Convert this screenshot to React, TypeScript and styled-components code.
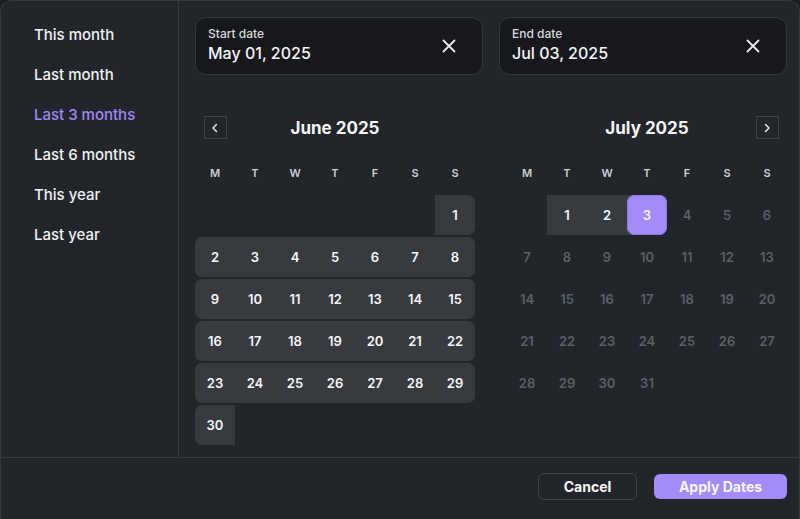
import styled, { createGlobalStyle } from 'styled-components';

const GlobalStyle = createGlobalStyle`
  html, body {
    margin: 0;
    padding: 0;
    background: #1b1d21;
  }
  * {
    box-sizing: border-box;
  }
`;

const Panel = styled.div`
  width: 800px;
  height: 519px;
  background: #222529;
  border: 1px solid #363a3f;
  border-bottom: none;
  border-radius: 12px 12px 0 0;
  display: grid;
  grid-template-columns: 178px 1fr;
  grid-template-rows: 456px 1fr;
  font-family: Inter, 'Noto Sans', sans-serif;
  color: #f2f3f5;
  overflow: hidden;
`;

const Sidebar = styled.div`
  border-right: 1px solid #363a3f;
  padding: 14px 0 0 33px;
  display: flex;
  flex-direction: column;
`;

const Preset = styled.div<{ $active?: boolean }>`
  height: 40px;
  font-size: 15px;
  font-weight: 500;
  line-height: 40px;
  color: ${(p) => (p.$active ? '#9f88f5' : '#f0f1f3')};
  cursor: pointer;
`;

const Main = styled.div`
  padding: 16px 12px 0 16px;
  display: flex;
  flex-direction: column;
`;

const Inputs = styled.div`
  display: grid;
  grid-template-columns: 288px 288px;
  gap: 16px;
`;

const DateField = styled.div`
  height: 58px;
  background: #17181b;
  border: 1px solid #34373c;
  border-radius: 11px;
  display: flex;
  align-items: center;
  padding: 0 24px 3px 12px;
`;

const FieldText = styled.div`
  flex: 1;
  display: flex;
  flex-direction: column;
  gap: 2px;
`;

const FieldLabel = styled.span`
  font-size: 12px;
  color: #d6d8dc;
  font-weight: 500;
  line-height: 15px;
`;

const FieldValue = styled.span`
  font-size: 16px;
  font-weight: 500;
  color: #f4f5f7;
  line-height: 20px;
`;

const ClearButton = styled.button`
  background: none;
  border: none;
  padding: 0;
  margin-top: 3px;
  width: 18px;
  height: 18px;
  display: flex;
  align-items: center;
  justify-content: center;
  color: #e8e9ec;
  cursor: pointer;
`;

const Calendars = styled.div`
  margin-top: 41px;
  display: grid;
  grid-template-columns: 280px 280px;
  gap: 32px;
`;

const Month = styled.div`
  display: flex;
  flex-direction: column;
`;

const Header = styled.div`
  height: 23px;
  display: grid;
  grid-template-columns: 40px 1fr 40px;
  align-items: center;
`;

const NavButton = styled.button`
  justify-self: center;
  width: 23px;
  height: 23px;
  padding: 0;
  background: transparent;
  border: 1px solid #3e4248;
  color: #e4e6e9;
  display: flex;
  align-items: center;
  justify-content: center;
  cursor: pointer;
`;

const Title = styled.div`
  text-align: center;
  font-size: 17px;
  font-weight: 700;
  color: #f5f6f8;
`;

const Weekdays = styled.div`
  margin-top: 24px;
  display: grid;
  grid-template-columns: repeat(7, 40px);
  height: 20px;
  align-items: center;
  margin-bottom: 12px;
`;

const Weekday = styled.span`
  text-align: center;
  font-size: 11px;
  font-weight: 600;
  color: #cdd0d4;
`;

const Days = styled.div`
  display: grid;
  grid-template-columns: repeat(7, 40px);
  grid-auto-rows: 40px;
  row-gap: 2px;
`;

const Cell = styled.div<{ $range: boolean; $left: boolean; $right: boolean; $half?: boolean }>`
  display: flex;
  align-items: center;
  justify-content: center;
  background: ${(p) =>
    p.$half
      ? 'linear-gradient(to right, #373b40 50%, transparent 50%)'
      : p.$range
      ? '#373b40'
      : 'transparent'};
  border-top-left-radius: ${(p) => (p.$left ? '7px' : '0')};
  border-bottom-left-radius: ${(p) => (p.$left ? '7px' : '0')};
  border-top-right-radius: ${(p) => (p.$right ? '7px' : '0')};
  border-bottom-right-radius: ${(p) => (p.$right ? '7px' : '0')};
`;

const DayNum = styled.span<{ $muted?: boolean; $selected?: boolean }>`
  width: 100%;
  height: 100%;
  display: flex;
  align-items: center;
  justify-content: center;
  font-size: 13px;
  font-weight: 600;
  color: ${(p) => (p.$muted ? '#5b6067' : '#f5f6f8')};
  background: ${(p) => (p.$selected ? '#a38cfa' : 'transparent')};
  border-radius: ${(p) => (p.$selected ? '8px' : '0')};
  box-shadow: ${(p) => (p.$selected ? 'inset 0 0 0 1px #9079ea' : 'none')};
`;

const Footer = styled.div`
  grid-column: 1 / 3;
  border-top: 1px solid #363a3f;
  display: flex;
  align-items: center;
  justify-content: flex-end;
  gap: 17px;
  padding: 0 12px 4px 0;
`;

const Button = styled.button<{ $primary?: boolean }>`
  height: ${(p) => (p.$primary ? '25px' : '27px')};
  padding: 0;
  width: ${(p) => (p.$primary ? '133px' : '99px')};
  border-radius: 6px;
  border: ${(p) => (p.$primary ? 'none' : '1px solid #3e4248')};
  background: ${(p) => (p.$primary ? '#a38cfa' : 'transparent')};
  color: #f7f7f9;
  font-family: Inter, 'Noto Sans', sans-serif;
  font-size: 14px;
  font-weight: 700;
  cursor: pointer;
`;

const XIcon = () => (
  <svg width="16" height="16" viewBox="0 0 16 16" fill="none" stroke="currentColor" strokeWidth="1.8" strokeLinecap="round">
    <path d="M2.5 2.5l11 11M13.5 2.5l-11 11" />
  </svg>
);

const Chevron = ({ dir }: { dir: 'left' | 'right' }) => (
  <svg width="12" height="12" viewBox="0 0 12 12" fill="none" stroke="currentColor" strokeWidth="1.5" strokeLinecap="round" strokeLinejoin="round">
    <path d={dir === 'left' ? 'M7.5 2.5L4 6l3.5 3.5' : 'M4.5 2.5L8 6 4.5 9.5'} />
  </svg>
);

const presets = ['This month', 'Last month', 'Last 3 months', 'Last 6 months', 'This year', 'Last year'];
const weekdays = ['M', 'T', 'W', 'T', 'F', 'S', 'S'];

type MonthProps = {
  title: string
  offset: number
  length: number
  rangeEnd: number
  selected?: number
  nav: 'left' | 'right'
}

function MonthView({ title, offset, length, rangeEnd, selected, nav }: MonthProps) {
  const cells = [];
  for (let i = 0; i < offset; i++) {
    cells.push(<div key={'e' + i} />);
  }
  for (let d = 1; d <= length; d++) {
    const col = (offset + d - 1) % 7;
    const inRange = d <= rangeEnd;
    const isSel = d === selected;
    cells.push(
      <Cell
        key={d}
        $range={inRange && !isSel}
        $half={isSel && col !== 0}
        $left={col === 0}
        $right={col === 6}
      >
        <DayNum $muted={!inRange} $selected={isSel}>
          {d}
        </DayNum>
      </Cell>
    );
  }

  return (
    <Month>
      <Header>
        {nav === 'left' ? (
          <NavButton>
            <Chevron dir="left" />
          </NavButton>
        ) : (
          <span />
        )}
        <Title>{title}</Title>
        {nav === 'right' ? (
          <NavButton>
            <Chevron dir="right" />
          </NavButton>
        ) : (
          <span />
        )}
      </Header>
      <Weekdays>
        {weekdays.map((w, i) => (
          <Weekday key={i}>{w}</Weekday>
        ))}
      </Weekdays>
      <Days>{cells}</Days>
    </Month>
  );
}

export default function App() {
  return (
    <>
      <GlobalStyle />
      <Panel>
        <Sidebar>
          {presets.map((p) => (
            <Preset key={p} $active={p === 'Last 3 months'}>
              {p}
            </Preset>
          ))}
        </Sidebar>
        <Main>
          <Inputs>
            <DateField>
              <FieldText>
                <FieldLabel>Start date</FieldLabel>
                <FieldValue>May 01, 2025</FieldValue>
              </FieldText>
              <ClearButton>
                <XIcon />
              </ClearButton>
            </DateField>
            <DateField>
              <FieldText>
                <FieldLabel>End date</FieldLabel>
                <FieldValue>Jul 03, 2025</FieldValue>
              </FieldText>
              <ClearButton>
                <XIcon />
              </ClearButton>
            </DateField>
          </Inputs>
          <Calendars>
            <MonthView title="June 2025" offset={6} length={30} rangeEnd={30} nav="left" />
            <MonthView title="July 2025" offset={1} length={31} rangeEnd={3} selected={3} nav="right" />
          </Calendars>
        </Main>
        <Footer>
          <Button>Cancel</Button>
          <Button $primary>Apply Dates</Button>
        </Footer>
      </Panel>
    </>
  );
}
